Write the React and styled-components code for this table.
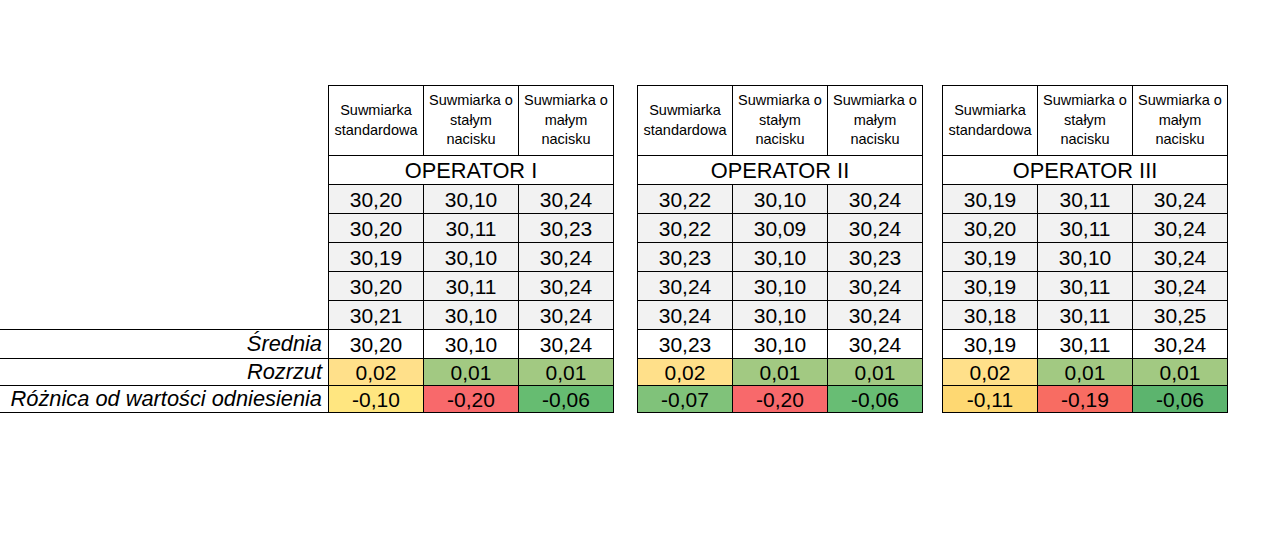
import React from "react";
import styled, { createGlobalStyle } from "styled-components";

const GlobalStyle = createGlobalStyle`
  html, body {
    margin: 0;
    background: #fff;
  }
  body {
    font-family: "Liberation Sans", Arial, sans-serif;
    color: #000;
  }
`;

const Page = styled.div`
  display: flex;
  align-items: flex-start;
  padding-top: 85px;
  width: 1273px;
  height: 547px;
  box-sizing: border-box;
`;

const LabelColumn = styled.div`
  width: 328px;
  flex: none;
  margin-top: 244px;
  border-top: 1px solid #000;
`;

const LabelRow = styled.div`
  height: ${(p) => p.$h}px;
  box-sizing: border-box;
  border-bottom: 1px solid #000;
  display: flex;
  align-items: center;
  justify-content: flex-end;
  padding-right: 6px;
  font-style: italic;
  font-size: 21.8px;
  line-height: 1;
`;

const Table = styled.div`
  flex: none;
  display: grid;
  grid-template-columns: repeat(3, 95px);
  grid-template-rows: 70px 29px repeat(6, 29px) 27px 27px;
  border-left: 1px solid #000;
  border-top: 1px solid #000;
  margin-left: ${(p) => p.$gap}px;
`;

const Cell = styled.div`
  box-sizing: border-box;
  border-right: 1px solid #000;
  border-bottom: 1px solid #000;
  background: ${(p) => p.$bg || "#fff"};
  display: flex;
  align-items: center;
  justify-content: center;
  text-align: center;
  font-size: 21px;
  line-height: 1;
  padding-top: 1px;
`;

const HeadCell = styled(Cell)`
  font-size: 14.5px;
  line-height: 19.5px;
  padding-top: 0;
`;

const OperatorCell = styled(Cell)`
  grid-column: 1 / span 3;
  font-size: 21.8px;
`;

const heads = [
  ["Suwmiarka", "standardowa"],
  ["Suwmiarka o", "stałym", "nacisku"],
  ["Suwmiarka o", "małym", "nacisku"],
];

const yellow = "#ffe08a";
const lightGreen = "#a2c982";

const tables = [
  {
    name: "OPERATOR I",
    gap: 0,
    rows: [
      ["30,20", "30,10", "30,24"],
      ["30,20", "30,11", "30,23"],
      ["30,19", "30,10", "30,24"],
      ["30,20", "30,11", "30,24"],
      ["30,21", "30,10", "30,24"],
    ],
    mean: ["30,20", "30,10", "30,24"],
    spread: ["0,02", "0,01", "0,01"],
    diff: ["-0,10", "-0,20", "-0,06"],
    diffColors: ["#ffe680", "#f8696b", "#66bc71"],
  },
  {
    name: "OPERATOR II",
    gap: 23,
    rows: [
      ["30,22", "30,10", "30,24"],
      ["30,22", "30,09", "30,24"],
      ["30,23", "30,10", "30,23"],
      ["30,24", "30,10", "30,24"],
      ["30,24", "30,10", "30,24"],
    ],
    mean: ["30,23", "30,10", "30,24"],
    spread: ["0,02", "0,01", "0,01"],
    diff: ["-0,07", "-0,20", "-0,06"],
    diffColors: ["#80c27a", "#f8696b", "#68bd74"],
  },
  {
    name: "OPERATOR III",
    gap: 19,
    rows: [
      ["30,19", "30,11", "30,24"],
      ["30,20", "30,11", "30,24"],
      ["30,19", "30,10", "30,24"],
      ["30,19", "30,11", "30,24"],
      ["30,18", "30,11", "30,25"],
    ],
    mean: ["30,19", "30,11", "30,24"],
    spread: ["0,02", "0,01", "0,01"],
    diff: ["-0,11", "-0,19", "-0,06"],
    diffColors: ["#fed872", "#f86c62", "#5cb46e"],
  },
];

const OperatorTable = ({ t }) => (
  <Table $gap={t.gap}>
    {heads.map((lines, i) => (
      <HeadCell key={"h" + i}>
        <div>
          {lines.map((l, j) => (
            <div key={j}>{l}</div>
          ))}
        </div>
      </HeadCell>
    ))}
    <OperatorCell>{t.name}</OperatorCell>
    {t.rows.map((row, r) =>
      row.map((v, c) => (
        <Cell key={r + "-" + c} $bg="#f2f2f2">
          {v}
        </Cell>
      ))
    )}
    {t.mean.map((v, c) => (
      <Cell key={"m" + c}>{v}</Cell>
    ))}
    {t.spread.map((v, c) => (
      <Cell key={"s" + c} $bg={c === 0 ? yellow : lightGreen}>
        {v}
      </Cell>
    ))}
    {t.diff.map((v, c) => (
      <Cell key={"d" + c} $bg={t.diffColors[c]}>
        {v}
      </Cell>
    ))}
  </Table>
);

export default function App() {
  return (
    <>
      <GlobalStyle />
      <Page>
        <LabelColumn>
          <LabelRow $h={29}>Średnia</LabelRow>
          <LabelRow $h={27}>Rozrzut</LabelRow>
          <LabelRow $h={27}>Różnica od wartości odniesienia</LabelRow>
        </LabelColumn>
        {tables.map((t) => (
          <OperatorTable key={t.name} t={t} />
        ))}
      </Page>
    </>
  );
}
